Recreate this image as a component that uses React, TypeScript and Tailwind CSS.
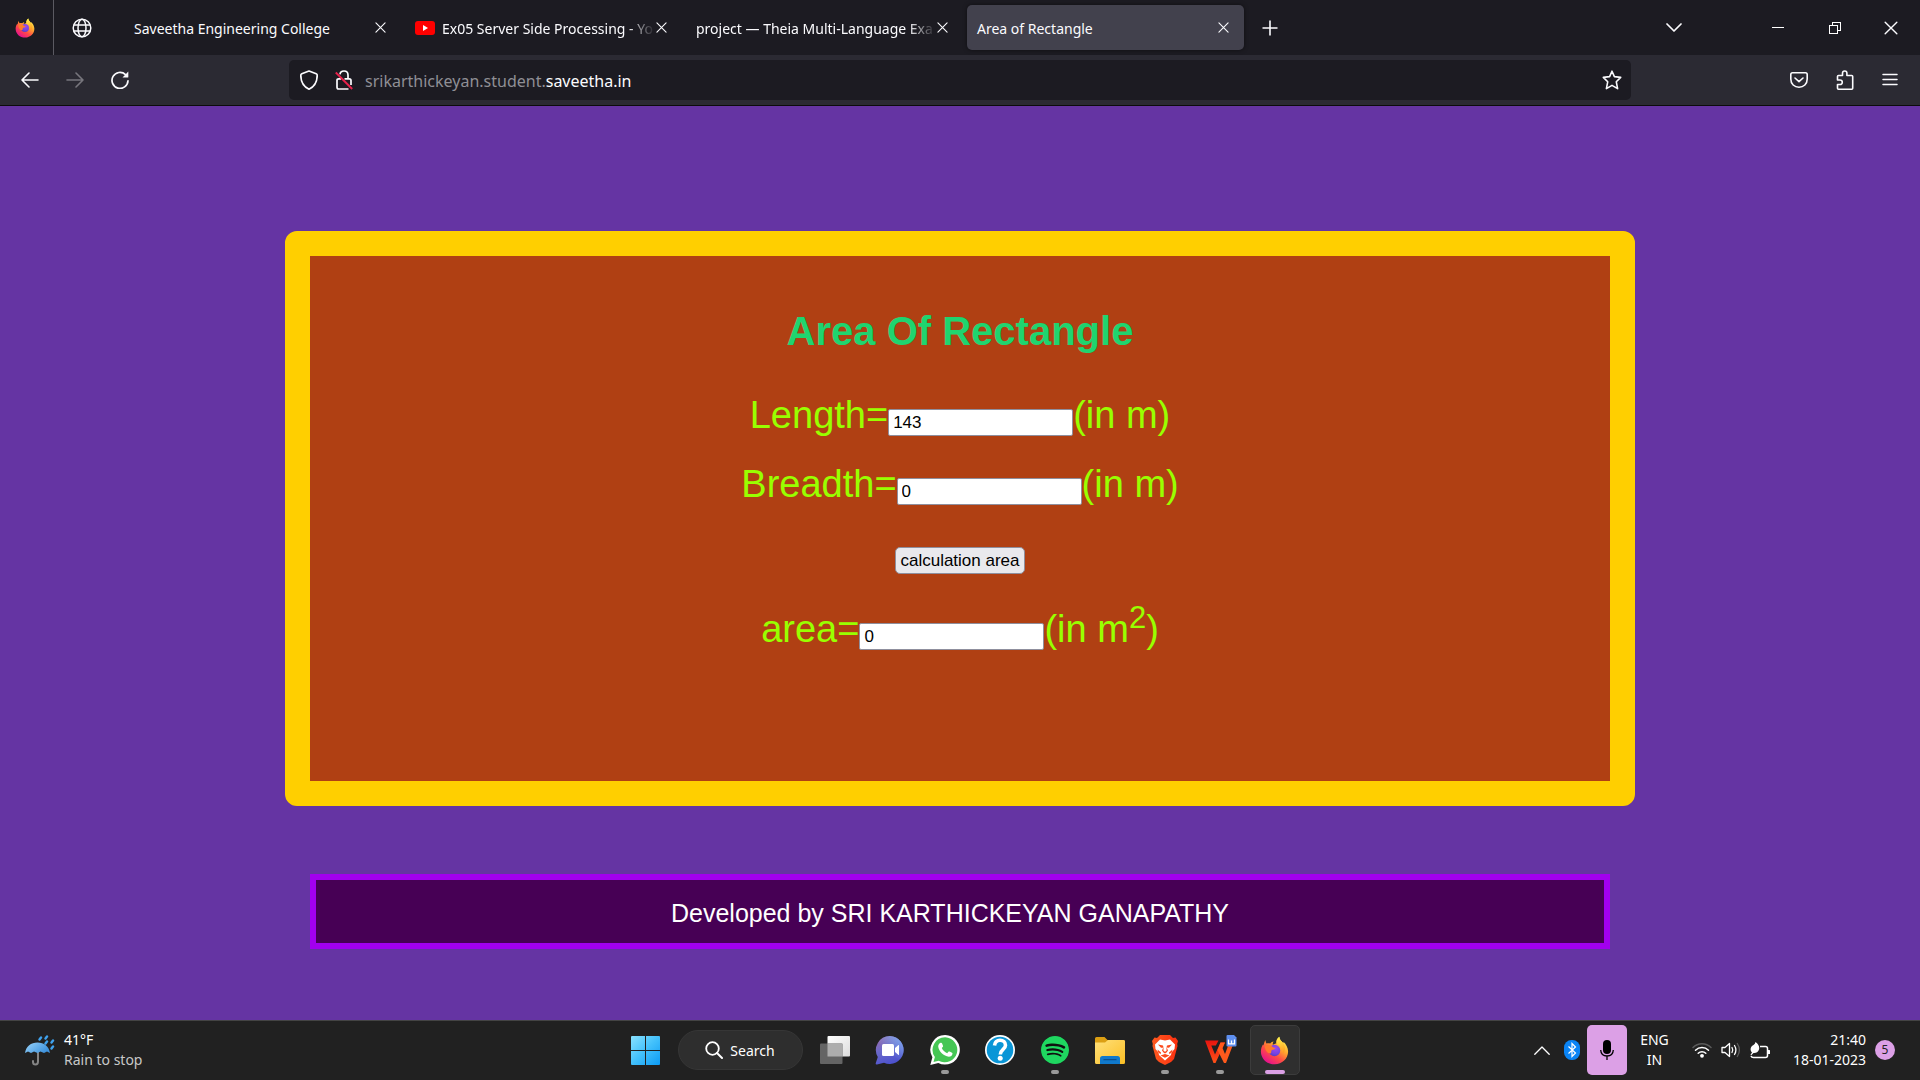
import React, { useState } from "react";
import { SiSpotify } from "react-icons/si";

const UI = "font-['Noto_Sans','Open_Sans',sans-serif]";
const ARIAL = "font-['Liberation_Sans',Arial,sans-serif]";

function Firefox({ id, className }: { id: string; className: string }) {
  const body = `${id}-body`;
  const core = `${id}-core`;
  const flame = `${id}-flame`;
  return (
    <svg viewBox="0 0 32 32" className={className} aria-hidden="true">
      <defs>
        <linearGradient id={body} x1="0.85" y1="0.1" x2="0.25" y2="0.95">
          <stop offset="0" stopColor="#fff14f" />
          <stop offset="0.35" stopColor="#ffa52e" />
          <stop offset="0.65" stopColor="#ff4b45" />
          <stop offset="1" stopColor="#e6118d" />
        </linearGradient>
        <radialGradient id={core} cx="0.6" cy="0.3" r="0.8">
          <stop offset="0" stopColor="#a04be8" />
          <stop offset="0.6" stopColor="#7542e5" />
          <stop offset="1" stopColor="#4d3fb0" />
        </radialGradient>
        <linearGradient id={flame} x1="0.3" y1="0" x2="0.5" y2="1">
          <stop offset="0" stopColor="#fff44f" />
          <stop offset="1" stopColor="#ff9a1f" />
        </linearGradient>
      </defs>
      <path
        d="M6.200 4.500C6 6 6.400 7.300 7.200 8.300C8.600 7.900 10 8 11.300 8.400C12.300 7.100 13.600 6.400 15 6.200C14.200 7.300 13.900 8.500 14.100 9.600L18 8C17.500 5.500 18.500 3 21.300 0.800C21.400 3.800 23.500 5.500 25.500 7.800C26 7.500 26 7 25.900 6.300C28.800 9 31 13 31 17.200C31 25 24.500 31.300 16.200 31.300C7.800 31.300 1 25.200 1 17C1 13.600 2.200 10.700 3.600 9C3.700 9.800 3.900 10.200 4.200 10.500C4.300 8 5 6 6.200 4.500Z"
        fill={`url(#${body})`}
      />
      <circle cx="16" cy="16" r="6.300" fill={`url(#${core})`} />
      <path
        d="M21.300 0.800C21.400 3.800 23.500 5.500 25.500 7.800C28 11 28.300 16 25.800 19.500C25.500 15 22.500 10.500 19 9.500C17.500 6.500 18.500 3 21.300 0.800Z"
        fill={`url(#${flame})`}
      />
      <path
        d="M5.500 11C8 9 12 9.600 14.300 12.300L17 13.600C16.500 15.300 14.300 15 12.800 15.800C12 16.600 13 18.800 11.500 19.300C8 19.500 5 15 5.500 11Z"
        fill="#ff7a2b"
      />
    </svg>
  );
}

function CloseGlyph({ className }: { className: string }) {
  return (
    <svg viewBox="0 0 12 12" className={className} fill="none" stroke="currentColor" aria-hidden="true">
      <path d="M1 1L11 11M11 1L1 11" strokeWidth="1.200" strokeLinecap="round" />
    </svg>
  );
}

function YouTube() {
  return (
    <svg viewBox="0 0 20 14" className="h-[14px] w-5 shrink-0" aria-hidden="true">
      <rect width="20" height="14" rx="3" fill="#ff0000" />
      <path d="M8 4L13 7L8 10Z" fill="#fff" />
    </svg>
  );
}

function Tab({ title, active, icon, fade }: { title: string; active?: boolean; icon?: React.ReactNode; fade?: boolean }) {
  return (
    <div
      className={`flex h-[45px] w-[277px] items-center rounded-[5px] pl-[10px] ${fade ? "pr-[15px]" : "pr-[10px]"} ${
        active ? "bg-[#42414d] shadow-[0_0_4px_rgba(0,0,0,0.5)]" : ""
      }`}
    >
      <button className="flex min-w-0 flex-1 items-center gap-[7px] text-left">
        {icon}
        <span
          className={`block flex-1 pt-[2px] text-[14px] leading-5 whitespace-nowrap ${
            fade ? "[mask-image:linear-gradient(to_left,transparent,black_28px)]" : ""
          }`}
        >
          {title}
        </span>
      </button>
      <button aria-label={`Close ${title}`} className={`flex h-6 shrink-0 items-center justify-center ${fade ? "w-3" : "w-[22px]"}`}>
        <CloseGlyph className="size-[11px]" />
      </button>
    </div>
  );
}

function TabStrip() {
  return (
    <div className="flex h-[55px] items-center bg-[#1c1b22] text-[#fbfbfe]">
      <button aria-label="Firefox View" className="flex h-full w-[54px] items-center justify-center border-r border-[#5b5a62] pr-[3px]">
        <Firefox id="ff-view" className="size-5" />
      </button>
      <button aria-label="Pinned tab" className="flex h-full w-[70px] items-center pl-[18px]">
        <svg viewBox="0 0 20 20" className="size-5" fill="none" stroke="currentColor" strokeWidth="1.500" aria-hidden="true">
          <circle cx="10" cy="10" r="8.800" />
          <ellipse cx="10" cy="10" rx="4" ry="8.800" />
          <path d="M1.800 7H18.200M1.800 13H18.200" />
        </svg>
      </button>
      <div className="flex gap-1">
        <Tab title="Saveetha Engineering College" />
        <Tab title="Ex05 Server Side Processing - Yo" icon={<YouTube />} fade />
        <Tab title="project — Theia Multi-Language Exa" fade />
        <Tab title="Area of Rectangle" active />
      </div>
      <button aria-label="New tab" className="ml-[18px] flex size-4 items-center justify-center">
        <svg viewBox="0 0 16 16" className="size-4" stroke="currentColor" strokeWidth="1.600" aria-hidden="true">
          <path d="M8 0.500V15.500M0.500 8H15.500" />
        </svg>
      </button>
      <div className="ml-auto flex items-center pr-[22px]">
        <button aria-label="List all tabs" className="mr-[90px]">
          <svg viewBox="0 0 16 10" className="h-[10px] w-4" fill="none" stroke="currentColor" strokeWidth="1.700" aria-hidden="true">
            <path d="M1 1L8 8L15 1" strokeLinecap="round" strokeLinejoin="round" />
          </svg>
        </button>
        <button aria-label="Minimize" className="mr-[45px]">
          <svg viewBox="0 0 12 12" className="size-3" stroke="#fff" shapeRendering="crispEdges" aria-hidden="true">
            <path d="M0 5.500H12" />
          </svg>
        </button>
        <button aria-label="Restore" className="mr-[43px]">
          <svg viewBox="0 0 12 12" className="size-3" fill="none" stroke="#fff" shapeRendering="crispEdges" aria-hidden="true">
            <path d="M0.500 3.500H8.500V11.500H0.500ZM3.500 3.500V0.500H11.500V8.500H8.500" />
          </svg>
        </button>
        <button aria-label="Close window">
          <CloseGlyph className="size-[14px]" />
        </button>
      </div>
    </div>
  );
}

function AddressBar() {
  return (
    <div className="flex h-[51px] items-center border-b border-[#0c0c0d] bg-[#2b2a33] text-[#fbfbfe]">
      <div className="flex w-[289px] shrink-0 items-center gap-[27px] pl-[21px]">
        <button aria-label="Back">
          <svg viewBox="0 0 18 16" className="h-4 w-[18px]" fill="none" stroke="currentColor" strokeWidth="1.600" strokeLinecap="round" strokeLinejoin="round" aria-hidden="true">
            <path d="M17 8H1M8 1L1 8L8 15" />
          </svg>
        </button>
        <button aria-label="Forward" disabled className="text-[#77767d]">
          <svg viewBox="0 0 18 16" className="h-4 w-[18px]" fill="none" stroke="currentColor" strokeWidth="1.600" strokeLinecap="round" strokeLinejoin="round" aria-hidden="true">
            <path d="M1 8H17M10 1L17 8L10 15" />
          </svg>
        </button>
        <button aria-label="Reload">
          <svg viewBox="0 0 18 18" className="size-[18px]" fill="none" stroke="currentColor" strokeWidth="1.700" strokeLinecap="round" aria-hidden="true">
            <path d="M14.500 3.600A8 8 0 1 0 17 9.800" />
            <path d="M17.300 0.600V5.900Q17.300 6.500 16.700 6.500H11.500Z" fill="currentColor" stroke="none" />
          </svg>
        </button>
      </div>
      <div className="flex h-10 flex-1 items-center rounded-[5px] bg-[#1c1b22] pr-[9px] pl-[11px]">
        <button aria-label="Tracking protection" className="mr-[17px]">
          <svg viewBox="0 0 18 20" className="h-5 w-[18px]" fill="none" stroke="currentColor" strokeWidth="1.700" strokeLinejoin="round" aria-hidden="true">
            <path d="M9 1L16.200 3.800Q17.200 4.200 17.200 5.200C17.200 12 15 16.500 9 19.200C3 16.500 0.800 12 0.800 5.200Q0.800 4.200 1.800 3.800Z" />
          </svg>
        </button>
        <button aria-label="Connection not secure" className="mr-3">
          <svg viewBox="0 0 18 20" className="h-5 w-[18px]" fill="none" stroke="currentColor" strokeWidth="1.700" aria-hidden="true">
            <path d="M5 4.300C5.200 2.300 6.800 1 9 1C11.400 1 13 2.600 13 5V8.500M9.500 8.800H14.300Q16 8.800 16 10.500V15M6 8.800H3.700Q2 8.800 2 10.500V17.300Q2 19 3.700 19H13.500" />
            <path d="M0.800 2.500L17.200 19" stroke="#e8214b" strokeWidth="1.900" />
          </svg>
        </button>
        <button aria-label="Address" className="flex-1 pt-[2px] text-left text-[16px] leading-6 text-[#8f8f95]">
          srikarthickeyan.student.<span className="text-[#fbfbfe]">saveetha.in</span>
        </button>
        <button aria-label="Bookmark this page">
          <svg viewBox="0 0 20 20" className="size-5" fill="none" stroke="currentColor" strokeWidth="1.600" strokeLinejoin="round" aria-hidden="true">
            <path d="M10 1.200L12.400 6.600L18.700 7.400L14.300 11.800L15.600 18.600L10 15.400L4.400 18.600L5.700 11.800L1.300 7.400L7.600 6.600Z" />
          </svg>
        </button>
      </div>
      <div className="flex w-[289px] shrink-0 items-center justify-end gap-[28px] pr-[22px]">
        <button aria-label="Save to Pocket">
          <svg viewBox="0 0 18 16" className="h-4 w-[18px]" fill="none" stroke="currentColor" strokeWidth="1.600" strokeLinecap="round" strokeLinejoin="round" aria-hidden="true">
            <path d="M2.500 0.800H15.500Q17.200 0.800 17.200 2.500V7C17.200 12 13.600 15.200 9 15.200C4.400 15.200 0.800 12 0.800 7V2.500Q0.800 0.800 2.500 0.800Z" />
            <path d="M5 6L9 9.600L13 6" />
          </svg>
        </button>
        <button aria-label="Extensions">
          <svg viewBox="0 0 18 20" className="h-5 w-[18px]" fill="none" stroke="currentColor" strokeWidth="1.600" strokeLinejoin="round" aria-hidden="true">
            <path d="M1.500 6.500Q1.500 5.500 2.500 5.500H6.500V3.200C6.500 1.900 7.400 1 8.700 1C10 1 10.900 1.900 10.900 3.200V5.500H15.700Q16.700 5.500 16.700 6.500V18.200Q16.700 19.200 15.700 19.200H2.500Q1.500 19.200 1.500 18.200V14.500H3.800C5.300 14.500 6.300 13.600 6.300 12.200C6.300 10.800 5.300 10 3.800 10H1.500Z" />
          </svg>
        </button>
        <button aria-label="Open menu">
          <svg viewBox="0 0 16 14" className="h-[14px] w-4" stroke="currentColor" strokeWidth="1.500" strokeLinecap="round" aria-hidden="true">
            <path d="M1 1.500H15M1 6.500H15M1 11.500H15" />
          </svg>
        </button>
      </div>
    </div>
  );
}

const FIELD = "h-[27px] w-[185px] rounded-[2px] border border-[#8f8f9d] bg-white px-1 pt-[2px] text-[17px] leading-5 text-black";
const ROW = "flex items-baseline justify-center text-[38px] leading-[44px] text-[#99ff00]";

function AreaPage() {
  const [length, setLength] = useState("143");
  const [breadth, setBreadth] = useState("0");
  const [area, setArea] = useState("0");
  return (
    <main className={`flex flex-1 flex-col bg-[#6534a3] px-6 pt-[125px] ${ARIAL}`}>
      <form
        className="mx-auto w-full max-w-[1350px] rounded-xl border-[25px] border-[#ffcf00] bg-[#b04013] pt-[52px] pb-[130px]"
        onSubmit={(e) => {
          e.preventDefault();
          setArea(String(Number(length) * Number(breadth)));
        }}
      >
        <h1 className="text-center text-[40px] leading-[46px] font-bold text-[#1fd46f]">Area Of Rectangle</h1>
        <div className={`mt-[39px] ${ROW}`}>
          <label htmlFor="length">Length=</label>
          <input id="length" value={length} onChange={(e) => setLength(e.target.value)} className={FIELD} />
          <span>(in m)</span>
        </div>
        <div className={`mt-[25px] ${ROW}`}>
          <label htmlFor="breadth">Breadth=</label>
          <input id="breadth" value={breadth} onChange={(e) => setBreadth(e.target.value)} className={FIELD} />
          <span>(in m)</span>
        </div>
        <div className="mt-[41px] flex justify-center">
          <button type="submit" className="h-[27px] rounded-[5px] border border-[#8f8f9d] bg-[#e9e9ed] px-1 text-[17px] leading-5 text-black">
            calculation area
          </button>
        </div>
        <div className={`mt-[33px] ${ROW}`}>
          <label htmlFor="area">area=</label>
          <input id="area" value={area} onChange={(e) => setArea(e.target.value)} className={FIELD} />
          <span>
            (in m<sup className="static align-super text-[31px] leading-0">2</sup>)
          </span>
        </div>
      </form>
      <footer className="mx-auto mt-[68px] mb-[71px] w-full max-w-[1300px] border-[6px] border-[#a200ef] bg-[#470055] pt-[19px] pr-5 pb-[15px] text-center text-[25px] leading-[29px] text-white">
        Developed by SRI KARTHICKEYAN GANAPATHY
      </footer>
    </main>
  );
}

function AppButton({ label, state, children }: { label: string; state?: "running" | "active"; children: React.ReactNode }) {
  return (
    <button
      aria-label={label}
      className={`relative flex size-[50px] items-center justify-center rounded-[5px] ${
        state === "active" ? "border border-[#3c3c3c] bg-[#2f2f2f]" : ""
      }`}
    >
      {children}
      {state === "running" && <span className="absolute bottom-[1px] h-1 w-2 rounded-full bg-[#9a9a9a]" />}
      {state === "active" && <span className="absolute bottom-0 h-1 w-5 rounded-full bg-[#dba0e5]" />}
    </button>
  );
}

function TaskbarApps() {
  return (
    <nav aria-label="Taskbar" className="flex items-center gap-[5px]">
      <AppButton label="Start">
        <svg viewBox="0 0 29 29" className="size-[29px]" aria-hidden="true">
          <defs>
            <linearGradient id="win" x1="0" y1="0" x2="29" y2="29" gradientUnits="userSpaceOnUse">
              <stop offset="0" stopColor="#8ae2ff" />
              <stop offset="0.500" stopColor="#42c0fb" />
              <stop offset="1" stopColor="#0c9bf5" />
            </linearGradient>
          </defs>
          <path d="M0 1Q0 0 1 0H14V14H0ZM15 0H28Q29 0 29 1V14H15ZM0 15H14V29H1Q0 29 0 28ZM15 15H29V28Q29 29 28 29H15Z" fill="url(#win)" />
        </svg>
      </AppButton>
      <button className="mx-[2px] flex h-10 w-[125px] items-center justify-center gap-[7px] rounded-full border border-[#363636] bg-[#2e2e2e] text-[14px] text-white">
        <svg viewBox="0 0 18 18" className="size-[18px]" fill="none" stroke="#fff" strokeWidth="1.800" strokeLinecap="round" aria-hidden="true">
          <circle cx="7.500" cy="7.500" r="6.300" />
          <path d="M12 12L17 17" strokeWidth="2" />
        </svg>
        Search
      </button>
      <AppButton label="Task view">
        <svg viewBox="0 0 30 28" className="h-7 w-[30px]" aria-hidden="true">
          <defs>
            <linearGradient id="tv" x1="0" y1="0" x2="1" y2="1">
              <stop offset="0" stopColor="#fff" />
              <stop offset="1" stopColor="#dcdcdc" />
            </linearGradient>
          </defs>
          <rect x="7.500" y="0" width="22.500" height="20.500" rx="1" fill="url(#tv)" />
          <rect x="0" y="7.500" width="22.500" height="20.500" rx="1" fill="#646464" />
          <rect x="7.500" y="7.500" width="15" height="13" fill="#adadad" />
        </svg>
      </AppButton>
      <AppButton label="Chat">
        <svg viewBox="0 0 30 30" className="size-[30px]" aria-hidden="true">
          <defs>
            <linearGradient id="chat" x1="0.200" y1="0" x2="0.600" y2="1">
              <stop offset="0" stopColor="#9a6aa8" />
              <stop offset="0.450" stopColor="#6a68c9" />
              <stop offset="1" stopColor="#4a50cf" />
            </linearGradient>
            <linearGradient id="chat-glow" x1="1" y1="0" x2="0.500" y2="0.600">
              <stop offset="0" stopColor="#7fb0f5" />
              <stop offset="1" stopColor="#7fb0f5" stopOpacity="0" />
            </linearGradient>
          </defs>
          <path d="M15 1A14 14 0 1 1 9 27.800L2 29.500Q0.300 29.800 0.800 28L2.800 22A14 14 0 0 1 15 1Z" fill="url(#chat)" />
          <path d="M15 1A14 14 0 1 1 9 27.800L2 29.500Q0.300 29.800 0.800 28L2.800 22A14 14 0 0 1 15 1Z" fill="url(#chat-glow)" />
          <rect x="7" y="9" width="12" height="12" rx="1.500" fill="#fff" />
          <path d="M20 13L23.500 10Q24 9.800 24 10.500V19.500Q24 20.200 23.500 20L20 17Z" fill="#fff" />
        </svg>
      </AppButton>
      <AppButton label="WhatsApp" state="running">
        <svg viewBox="0 0 30 30" className="size-[30px]" aria-hidden="true">
          <path d="M15.200 0A14.800 14.800 0 1 1 8.300 28L0.300 30L2.400 22.300A14.800 14.800 0 0 1 15.200 0Z" fill="#fff" />
          <path d="M15.200 2.300A12.500 12.500 0 1 1 8.700 25.700L3.500 27L4.900 22A12.500 12.500 0 0 1 15.200 2.300Z" fill="#45c654" />
          <path d="M10.600 7.800C11.300 7.600 11.800 7.700 12.100 8.500L13 10.700C13.200 11.200 13.100 11.600 12.700 12L11.800 13C12.800 15.300 14.800 17.100 17.200 18.200L18.400 16.800C18.700 16.400 19.100 16.300 19.600 16.500L22 17.700C22.500 18 22.600 18.300 22.500 18.800C22.200 20.700 20.800 21.800 18.900 21.800C13.600 21.400 8.700 16.200 8.200 11.600C8.200 9.900 9.200 8.200 10.600 7.800Z" fill="#fff" />
        </svg>
      </AppButton>
      <AppButton label="Get Help">
        <svg viewBox="0 0 30 30" className="size-[30px]" aria-hidden="true">
          <circle cx="15" cy="15" r="15" fill="#fff" />
          <circle cx="15" cy="15" r="13.300" fill="#0a96d7" />
          <path d="M9.500 10.500C10 7 12 5.300 15 5.300C18.300 5.300 20.500 7.300 20.500 10.200C20.500 14.500 15.300 14.300 15.300 19.500" fill="none" stroke="#fff" strokeWidth="3.600" />
          <circle cx="15.200" cy="23.200" r="2.500" fill="#fff" />
        </svg>
      </AppButton>
      <AppButton label="Spotify" state="running">
        <span className="flex size-7 items-center justify-center rounded-full bg-[#101010]">
          <SiSpotify className="size-7 shrink-0 text-[#1fd760]" />
        </span>
      </AppButton>
      <AppButton label="File Explorer">
        <svg viewBox="0 0 30 27" className="h-[27px] w-[30px]" aria-hidden="true">
          <defs>
            <linearGradient id="folder" x1="0" y1="0" x2="1" y2="1">
              <stop offset="0" stopColor="#ffe07a" />
              <stop offset="1" stopColor="#fbbf24" />
            </linearGradient>
          </defs>
          <path d="M0 1.500Q0 0 1.500 0H9.500L12.500 3H28.500Q30 3 30 4.500V12H0Z" fill="#dc9f13" />
          <path d="M0 5.500H10L13 3H28.500Q30 3 30 4.500V25.500Q30 27 28.500 27H1.500Q0 27 0 25.500Z" fill="url(#folder)" />
          <path d="M5 27V21.500Q5 19 7.500 19H22.500Q25 19 25 21.500V27Z" fill="#1079cc" />
          <path d="M9 22.700H21" stroke="#0a4f8f" strokeWidth="1.300" strokeLinecap="round" />
        </svg>
      </AppButton>
      <AppButton label="Brave" state="running">
        <svg viewBox="0 0 28 30" className="h-[30px] w-7" aria-hidden="true">
          <defs>
            <linearGradient id="brave" x1="0" y1="0" x2="1" y2="0">
              <stop offset="0" stopColor="#ff5a1f" />
              <stop offset="1" stopColor="#fb2f10" />
            </linearGradient>
          </defs>
          <path d="M9 0H19L22 3L24.500 2.500L27 6L26.200 9L26.500 11L23 24L20 27L14 30L8 27L5 24L1.500 11L1.800 9L1 6L3.500 2.500L6 3Z" fill="url(#brave)" />
          <path d="M9 4.500L14 5.500L19 4.500L24 9.500L23.500 14L20.500 17.500L20 20L14 25.500L8 20L7.500 17.500L4.500 14L4 9.500Z" fill="#fff" />
          <path d="M7 9.500L12 10.500L12.500 12.500L10 12.800ZM21 9.500L16 10.500L15.500 12.500L18 12.800ZM12.500 12L11 15.500L12.500 17.500L14 18.500L15.500 17.500L17 15.500L15.500 12V15.800L14 16.800L12.500 15.800ZM9.500 20.500L14 19L18.500 20.500L14 22.800ZM6.500 14.500L10 17.500L9.500 19.300L7 17ZM21.500 14.500L18 17.500L18.500 19.300L21 17Z" fill="#fb4a1c" />
        </svg>
      </AppButton>
      <AppButton label="WPS Office" state="running">
        <svg viewBox="0 0 34 30" className="h-[30px] w-[34px]" aria-hidden="true">
          <defs>
            <linearGradient id="wps" x1="0" y1="0" x2="0" y2="1">
              <stop offset="0" stopColor="#e8140f" />
              <stop offset="1" stopColor="#ff5218" />
            </linearGradient>
          </defs>
          <path d="M2 5.500H15.500L12.800 10.500H8.300L12 19.500L17.500 7.500H22L12.500 28H10.500Z" fill="url(#wps)" />
          <path d="M17.500 7.500H22L19.500 13L22 19L25 11H29.500L23 28H21L14.500 15Z" fill="#ff5a1c" />
          <path d="M24.500 0H31L33.500 2.500V10.500Q33.500 11.500 32.500 11.500H24.500Q23.500 11.500 23.500 10.500V1Q23.500 0 24.500 0Z" fill="#5e8ff0" />
          <path d="M25.500 4.500V8.800H31.500V4.500M28.500 5.500V8.800" fill="none" stroke="#fff" strokeWidth="1.200" />
        </svg>
      </AppButton>
      <AppButton label="Firefox" state="active">
        <Firefox id="ff-task" className="size-[29px]" />
      </AppButton>
    </nav>
  );
}

function Weather() {
  return (
    <button className="flex items-center gap-[9px] justify-self-start pl-[25px] text-left">
      <svg viewBox="0 0 30 31" className="h-[31px] w-[30px]" fill="none" aria-hidden="true">
        <defs>
          <linearGradient id="umb" x1="0" y1="0" x2="1" y2="0.500">
            <stop offset="0" stopColor="#9ad4fb" />
            <stop offset="1" stopColor="#3f93dc" />
          </linearGradient>
        </defs>
        <path d="M13 15V26.500Q13 29.500 10.500 29.500Q8 29.500 8 27V26" stroke="#858585" strokeWidth="2" strokeLinecap="round" />
        <path d="M0 18C1 11.500 6 7.500 12.500 7.500C19 7.500 24 11.500 25 18L22 16.500L19 18L15.500 16.500L12.500 18L9 16.500L6 18L3 16.500Z" fill="url(#umb)" />
        <path d="M14.500 4.500L16 2.500M20.500 3.500L22 1.500M20.500 8.500L22 6.500M26.500 7.500L28 5.500M26.500 13.500L28 11.500" stroke="#3fa2ee" strokeWidth="2.400" strokeLinecap="round" />
      </svg>
      <span className="flex flex-col text-[14px] leading-5">
        <span className="text-white">41°F</span>
        <span className="text-[#c8c8c8]">Rain to stop</span>
      </span>
    </button>
  );
}

function Tray() {
  return (
    <div className="flex items-center justify-self-end pr-[25px] text-[14px] leading-5 text-white">
      <button aria-label="Show hidden icons" className="mr-[14px]">
        <svg viewBox="0 0 16 9" className="h-[9px] w-4" fill="none" stroke="#fff" strokeWidth="1.300" strokeLinecap="round" strokeLinejoin="round" aria-hidden="true">
          <path d="M0.800 8.200L8 1L15.200 8.200" />
        </svg>
      </button>
      <button aria-label="Bluetooth" className="mr-[7px]">
        <svg viewBox="0 0 16 20" className="h-5 w-4" fill="none" aria-hidden="true">
          <rect width="16" height="20" rx="7.500" fill="#0a84f5" />
          <path d="M4.500 6.500L11.500 13L8 16.500V3.500L11.500 7L4.500 13.500" stroke="#fff" strokeWidth="1.200" />
        </svg>
      </button>
      <button aria-label="Microphone in use" className="mr-3 flex h-[50px] w-10 items-center justify-center rounded-[5px] bg-[#dca0e6]">
        <svg viewBox="0 0 14 20" className="h-5 w-[14px]" fill="none" aria-hidden="true">
          <rect x="3" y="0" width="8" height="14" rx="4" fill="#000" />
          <path d="M0.700 10C0.900 13.800 3.500 16 7 16C10.500 16 13.100 13.800 13.300 10M7 16V20" stroke="#000" strokeWidth="1.300" />
        </svg>
      </button>
      <button className="mr-[22px] w-[31px] text-center">ENG IN</button>
      <button aria-label="Network, volume and battery" className="mr-5 flex items-center gap-[9px]">
        <svg viewBox="0 0 20 16" className="h-4 w-5" fill="none" strokeLinecap="round" aria-hidden="true">
          <path d="M1 5.500A12.500 12.500 0 0 1 19 5.500" stroke="#5b5b5b" strokeWidth="1.500" />
          <path d="M3.500 8.300A9.200 9.200 0 0 1 16.500 8.300M6.200 11.200A5.500 5.500 0 0 1 13.800 11.200" stroke="#fff" strokeWidth="1.500" />
          <circle cx="10" cy="13.800" r="1.900" fill="#fff" />
        </svg>
        <svg viewBox="0 0 20 16" className="h-4 w-5" fill="none" stroke="#fff" strokeWidth="1.300" strokeLinecap="round" strokeLinejoin="round" aria-hidden="true">
          <path d="M1 5.500H4L8.500 1.500V14.500L4 10.500H1Z" />
          <path d="M11 5.500Q12.500 8 11 10.500M13.500 3.500Q16.300 8 13.500 12.500" />
          <path d="M16.300 1.500Q20.500 8 16.300 14.500" stroke="#5b5b5b" />
        </svg>
        <svg viewBox="0 0 21 17" className="h-[17px] w-[21px]" fill="none" aria-hidden="true">
          <path d="M10 4.500H15.500Q17.500 4.500 17.500 6.500V13.500Q17.500 15.500 15.500 15.500H3.500Q1.500 15.500 1 14" stroke="#fff" strokeWidth="1.500" />
          <path d="M18 8H19.500Q20 8 20 8.500V11.500Q20 12 19.500 12H18Z" fill="#fff" />
          <path d="M5.500 0C8.500 2 10 5 8.800 8C8 10 6 11.300 3.500 11L1 13.500L0.500 12.800L2 10.500C-0.500 8 0.500 4.500 3.500 3Q5.200 2 5.500 0Z" fill="#fff" />
        </svg>
      </button>
      <button className="flex items-center gap-[9px]">
        <span className="w-[75px] text-right whitespace-nowrap">
          21:40
          <br />
          18-01-2023
        </span>
        <span className="flex size-5 items-center justify-center rounded-full bg-[#dca0e6] text-[12px] text-[#222]">5</span>
      </button>
    </div>
  );
}

export default function App() {
  return (
    <div className={`flex min-h-screen flex-col ${UI}`}>
      <header>
        <TabStrip />
        <AddressBar />
      </header>
      <AreaPage />
      <div className="grid h-[60px] grid-cols-[1fr_auto_1fr] items-center border-t border-[#444] bg-[#212121] pb-[1px]">
        <Weather />
        <TaskbarApps />
        <Tray />
      </div>
    </div>
  );
}
